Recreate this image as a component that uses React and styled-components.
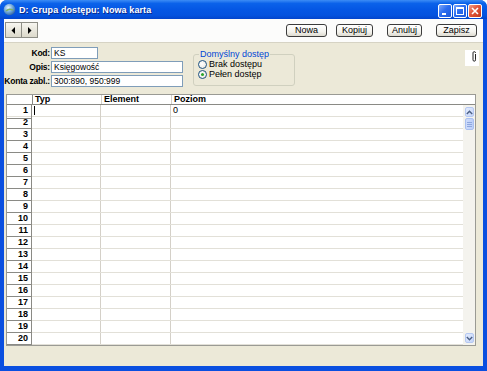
import React from 'react';
import styled, { createGlobalStyle } from 'styled-components';

const GlobalStyle = createGlobalStyle`
  html, body {
    margin: 0;
    padding: 0;
    background: #ffffff;
  }
  body {
    font-family: "Liberation Sans", Arial, sans-serif;
    font-size: 9px;
    color: #000;
  }
`;

const Window = styled.div`
  width: 487px;
  height: 371px;
  display: flex;
  flex-direction: column;
  background: #0a4fe0;
  border-radius: 7px 7px 0 0;
  overflow: hidden;
`;

const TitleBar = styled.div`
  height: 19px;
  flex: none;
  display: flex;
  align-items: center;
  padding: 0 5px 0 3px;
  background: linear-gradient(#3d8df5 0%, #0b62ea 18%, #0557e4 50%, #0453df 80%, #0345cc 100%);
`;

const TitleText = styled.span`
  flex: 1;
  margin-left: 3px;
  color: #fff;
  font-weight: bold;
  font-size: 9px;
  letter-spacing: 0.1px;
  text-shadow: 1px 1px 0 #0a2a8a;
`;

const Controls = styled.div`
  display: flex;
  gap: 1px;
  margin-top: 2px;
`;

const ControlButton = styled.div`
  width: 14px;
  height: 14px;
  box-sizing: border-box;
  border: 1px solid #fff;
  border-radius: 2px;
  display: flex;
  align-items: center;
  justify-content: center;
  background: ${p => (p.$close
    ? 'linear-gradient(135deg, #f0a08a 0%, #e2553a 45%, #c23a1c 100%)'
    : 'linear-gradient(135deg, #7fa8f8 0%, #2c6df0 45%, #1d57d8 100%)')};
`;

const Client = styled.div`
  flex: 1;
  margin: 0 4px 5px 4px;
  background: #ece9d8;
  display: flex;
  flex-direction: column;
`;

const Toolbar = styled.div`
  height: 24px;
  flex: none;
  display: flex;
  align-items: center;
  padding: 0 6px 0 1px;
  background: #fcfcfb;
  border-bottom: 1px solid #d6d3c4;
  box-sizing: border-box;
`;

const NavGroup = styled.div`
  display: flex;
  margin-top: 3px;
  align-self: flex-start;
  border: 1px solid #8e8e86;
`;

const NavButton = styled.div`
  width: 15px;
  height: 14px;
  display: flex;
  align-items: center;
  justify-content: center;
  background: linear-gradient(#f7f6f0, #dcd9cb);
  & + & {
    border-left: 1px solid #8e8e86;
  }
`;

const Spacer = styled.div`
  flex: 1;
`;

const ActionButton = styled.button`
  width: ${p => p.$w}px;
  height: 13px;
  margin-left: ${p => p.$gap}px;
  padding: 0;
  box-sizing: border-box;
  border: 1px solid #3c3c3c;
  border-radius: 3px;
  background: linear-gradient(#ffffff 0%, #f4f3ee 60%, #dedbd0 100%);
  font-family: "Liberation Sans", Arial, sans-serif;
  font-size: 9px;
  color: #000;
  line-height: 11px;
`;

const FormArea = styled.div`
  height: 51px;
  flex: none;
  display: flex;
  align-items: flex-start;
  padding-top: 4px;
  box-sizing: border-box;
`;

const Fields = styled.div`
  display: grid;
  grid-template-columns: 46px auto;
  column-gap: 1px;
  row-gap: 2px;
  align-items: center;
`;

const FieldLabel = styled.label`
  text-align: right;
  font-weight: bold;
  font-size: 8.5px;
  letter-spacing: -0.2px;
  white-space: nowrap;
`;

const TextInput = styled.div`
  width: ${p => p.$w}px;
  height: 12px;
  box-sizing: border-box;
  border: 1px solid #7f9db9;
  background: #fff;
  padding-left: 2px;
  font-size: 8.5px;
  line-height: 10px;
  white-space: nowrap;
  overflow: hidden;
`;

const GroupBox = styled.fieldset`
  margin: 3px 0 0 10px;
  padding: 0 4px 2px 4px;
  width: 102px;
  height: 36px;
  box-sizing: border-box;
  border: 1px solid #d0d0bf;
  border-radius: 3px;
`;

const Legend = styled.legend`
  padding: 0 1px;
  margin-left: 1px;
  color: #0046d5;
  font-size: 9px;
  line-height: 9px;
`;

const RadioRow = styled.div`
  display: flex;
  align-items: center;
  height: 10px;
  gap: 2px;
  font-size: 9px;
`;

const RadioCircle = styled.span`
  width: 9px;
  height: 9px;
  box-sizing: border-box;
  border: 1px solid #1c5180;
  border-radius: 50%;
  background: radial-gradient(circle at 40% 40%, #ffffff 0%, #e6e5de 100%);
  display: flex;
  align-items: center;
  justify-content: center;
  &::after {
    content: '';
    display: ${p => (p.$on ? 'block' : 'none')};
    width: 3px;
    height: 3px;
    border-radius: 50%;
    background: #2ca52c;
  }
`;

const ClipBox = styled.div`
  margin: 3px 4px 0 auto;
  width: 14px;
  height: 16px;
  background: #fff;
  display: flex;
  justify-content: flex-end;
  align-items: flex-start;
  padding: 1px 2px 0 0;
  box-sizing: border-box;
`;

const GridFrame = styled.div`
  margin: 0 7px 0 2px;
  flex: none;
  border: 1px solid #9a9a94;
  background: #fff;
  display: flex;
  flex-direction: column;
`;

const HeaderRow = styled.div`
  display: grid;
  grid-template-columns: 25px 69px 70px 1fr;
  height: 9px;
  border-bottom: 1px solid #8a8a85;
`;

const HeaderCell = styled.div`
  font-weight: bold;
  font-size: 9px;
  line-height: 9px;
  padding-left: 2px;
  border-left: ${p => (p.$first ? 'none' : '1px solid #d4d0c8')};
  &:nth-child(2) {
    border-left: 1px solid #8a8a85;
  }
`;

const Body = styled.div`
  display: flex;
`;

const Rows = styled.div`
  flex: 1;
`;

const Row = styled.div`
  display: grid;
  grid-template-columns: 25px 69px 70px 1fr;
  height: 12px;
  box-sizing: border-box;
  border-bottom: 1px solid #e2e0d8;
`;

const NumCell = styled.div`
  font-weight: bold;
  font-size: 9px;
  line-height: 11px;
  text-align: right;
  padding-right: 3px;
  border-right: 1px solid #8a8a85;
  border-bottom: 1px solid #8a8a85;
  margin-bottom: -1px;
`;

const Cell = styled.div`
  font-size: 9px;
  line-height: 11px;
  padding-left: 2px;
  border-right: ${p => (p.$last ? 'none' : '1px solid #d4d0c8')};
`;

const Caret = styled.span`
  display: inline-block;
  width: 1px;
  height: 9px;
  margin-top: 1px;
  background: #000;
`;

const ScrollBar = styled.div`
  width: 12px;
  flex: none;
  background: #f4f3ee;
  display: flex;
  flex-direction: column;
  align-items: center;
  padding: 2px 0 1px 0;
  box-sizing: border-box;
`;

const ScrollButton = styled.div`
  width: 9px;
  height: 10px;
  box-sizing: border-box;
  border: 1px solid #b5c8f2;
  border-radius: 2px;
  background: linear-gradient(135deg, #e2ebfd 0%, #c4d4f8 100%);
  display: flex;
  align-items: center;
  justify-content: center;
  margin-bottom: 1px;
  margin-top: ${p => (p.$end ? 'auto' : '0')};
`;

const Thumb = styled.div`
  width: 9px;
  height: 12px;
  box-sizing: border-box;
  border: 1px solid #a9c0f0;
  border-radius: 2px;
  background: linear-gradient(90deg, #cfdcfb, #bccff8);
  display: flex;
  flex-direction: column;
  align-items: center;
  justify-content: center;
  gap: 1px;
  & > i {
    display: block;
    width: 5px;
    height: 1px;
    background: #8ea7de;
  }
`;

const Chevron = ({ up }) => (
  <svg width="7" height="5" viewBox="0 0 7 5">
    <path
      d={up ? 'M0.8 4 L3.5 1.3 L6.2 4' : 'M0.8 1 L3.5 3.7 L6.2 1'}
      fill="none"
      stroke="#4d6185"
      strokeWidth="1.4"
    />
  </svg>
);

const rows = Array.from({ length: 20 }, (_, i) => i + 1);

export default function App() {
  return (
    <>
      <GlobalStyle />
      <Window>
        <TitleBar>
          <svg width="13" height="13" viewBox="0 0 13 13">
            <defs>
              <radialGradient id="gl" cx="40%" cy="35%" r="70%">
                <stop offset="0%" stopColor="#e8f4ff" />
                <stop offset="55%" stopColor="#6ea6d8" />
                <stop offset="100%" stopColor="#2f5f9c" />
              </radialGradient>
            </defs>
            <circle cx="6.5" cy="6.5" r="5.8" fill="url(#gl)" />
            <path d="M3 8 Q6 5 10 7" stroke="#7fb36a" strokeWidth="1.6" fill="none" />
          </svg>
          <TitleText>D: Grupa dostępu: Nowa karta</TitleText>
          <Controls>
            <ControlButton>
              <svg width="8" height="8" viewBox="0 0 8 8">
                <rect x="1" y="6" width="4" height="2" fill="#fff" />
              </svg>
            </ControlButton>
            <ControlButton>
              <svg width="8" height="8" viewBox="0 0 8 8">
                <rect x="0.5" y="0.5" width="7" height="7" fill="none" stroke="#fff" />
                <rect x="0.5" y="0.5" width="7" height="1.5" fill="#fff" />
              </svg>
            </ControlButton>
            <ControlButton $close>
              <svg width="8" height="8" viewBox="0 0 8 8">
                <path d="M1 1 L7 7 M7 1 L1 7" stroke="#fff" strokeWidth="1.6" />
              </svg>
            </ControlButton>
          </Controls>
        </TitleBar>
        <Client>
          <Toolbar>
            <NavGroup>
              <NavButton>
                <svg width="5" height="7" viewBox="0 0 5 7">
                  <path d="M4 0 L0.5 3.5 L4 7 Z" fill="#000" />
                </svg>
              </NavButton>
              <NavButton>
                <svg width="5" height="7" viewBox="0 0 5 7">
                  <path d="M1 0 L4.5 3.5 L1 7 Z" fill="#000" />
                </svg>
              </NavButton>
            </NavGroup>
            <Spacer />
            <ActionButton $w={41} $gap={0}>Nowa</ActionButton>
            <ActionButton $w={37} $gap={9}>Kopiuj</ActionButton>
            <ActionButton $w={35} $gap={14}>Anuluj</ActionButton>
            <ActionButton $w={41} $gap={14}>Zapisz</ActionButton>
          </Toolbar>
          <FormArea>
            <Fields>
              <FieldLabel>Kod:</FieldLabel>
              <TextInput $w={47}>KS</TextInput>
              <FieldLabel>Opis:</FieldLabel>
              <TextInput $w={132}>Księgowość</TextInput>
              <FieldLabel>Konta zabl.:</FieldLabel>
              <TextInput $w={132}>300:890, 950:999</TextInput>
            </Fields>
            <GroupBox>
              <Legend>Domyślny dostęp</Legend>
              <RadioRow>
                <RadioCircle />
                Brak dostępu
              </RadioRow>
              <RadioRow>
                <RadioCircle $on />
                Pełen dostęp
              </RadioRow>
            </GroupBox>
            <ClipBox>
              <svg width="5" height="11" viewBox="0 0 5 11">
                <path
                  d="M3.5 3 V8.8 Q3.5 10.2 2.3 10.2 Q1 10.2 1 8.8 V1.8 Q1 0.7 2.3 0.7 Q3.5 0.7 3.5 1.8"
                  fill="none"
                  stroke="#222"
                  strokeWidth="1"
                />
              </svg>
            </ClipBox>
          </FormArea>
          <GridFrame>
            <HeaderRow>
              <HeaderCell $first />
              <HeaderCell>Typ</HeaderCell>
              <HeaderCell>Element</HeaderCell>
              <HeaderCell>Poziom</HeaderCell>
            </HeaderRow>
            <Body>
              <Rows>
                {rows.map(n => (
                  <Row key={n}>
                    <NumCell>{n}</NumCell>
                    <Cell>{n === 1 ? <Caret /> : null}</Cell>
                    <Cell />
                    <Cell $last>{n === 1 ? '0' : ''}</Cell>
                  </Row>
                ))}
              </Rows>
              <ScrollBar>
                <ScrollButton>
                  <Chevron up />
                </ScrollButton>
                <Thumb>
                  <i />
                  <i />
                  <i />
                </Thumb>
                <ScrollButton $end>
                  <Chevron />
                </ScrollButton>
              </ScrollBar>
            </Body>
          </GridFrame>
        </Client>
      </Window>
    </>
  );
}
